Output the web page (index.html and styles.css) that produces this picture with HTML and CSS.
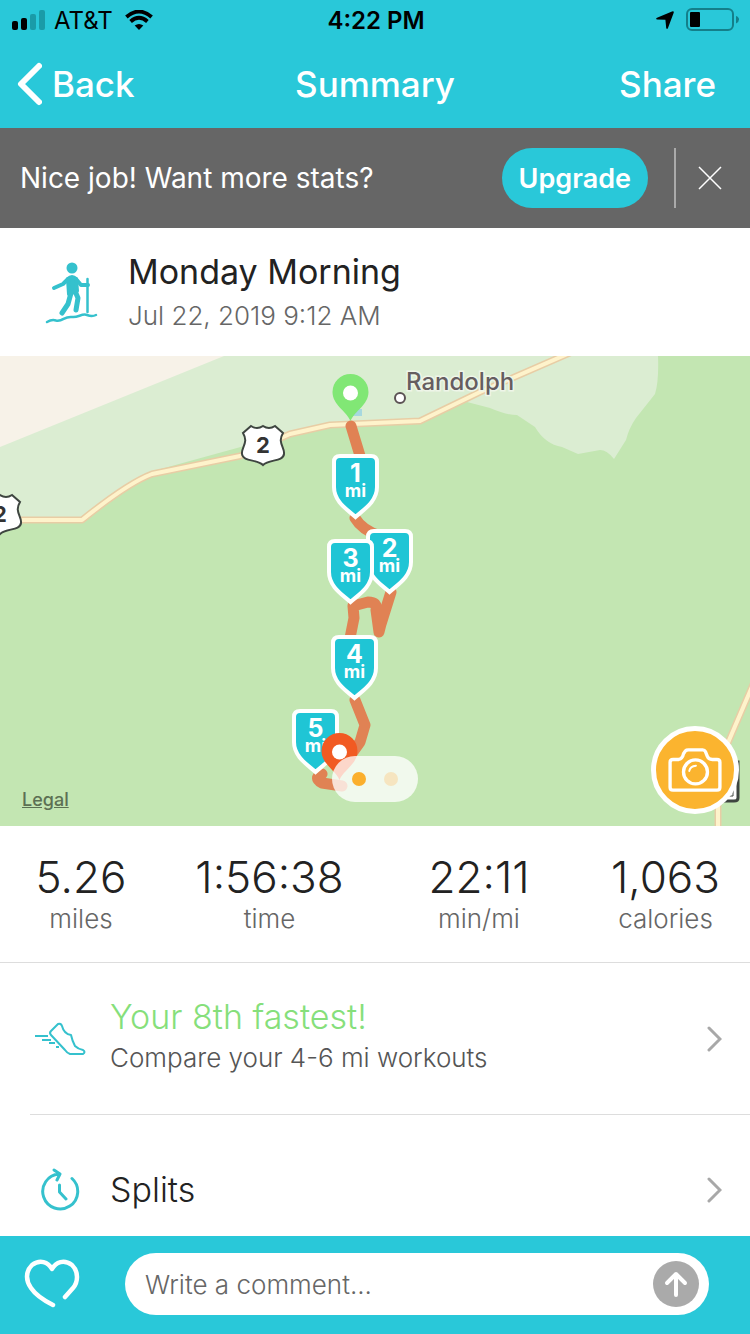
FILE: index.html
```html
<!DOCTYPE html>
<html lang="en">
<head>
<meta charset="utf-8">
<meta name="viewport" content="width=device-width, initial-scale=1">
<title>Summary</title>
<link rel="stylesheet" href="styles.css">
</head>
<body>
<div class="app">
  <header class="top">
    <div class="status">
      <div class="status-left">
        <svg class="signal" viewBox="0 0 34 20" aria-hidden="true">
          <rect x="0" y="11" width="6" height="9" rx="2"/>
          <rect x="9" y="8" width="6" height="12" rx="2"/>
          <g fill="#1a9ba8"><rect x="18" y="4" width="6" height="16" rx="2"/><rect x="27" y="0" width="6" height="20" rx="2"/></g>
        </svg>
        <span>AT&amp;T</span>
        <svg class="wifi" viewBox="0 0 28 20" aria-hidden="true">
          <path d="M14 20 9.7 15.6Q14 12.2 18.3 15.6Z"/>
          <path d="M5.600 11.400Q14 4.200 22.400 11.400M1.400 6.900Q14-3.700 26.600 6.900" fill="none" stroke="#000" stroke-width="3.900"/>
        </svg>
      </div>
      <span class="clock">4:22 PM</span>
      <div class="status-right">
        <svg class="arrow" viewBox="0 0 18 18" aria-hidden="true"><path d="M16 .4Q18.400-.4 17.600 2L12 17Q11 18.800 10.200 17L9.400 8.800 1.200 8.600Q-.8 8 1 6.800Z"/></svg>
        <svg class="battery" viewBox="0 0 54 24" aria-hidden="true">
          <rect x="1" y="1" width="46" height="21" rx="5" fill="none" stroke="#147f8a" stroke-width="2"/>
          <rect x="4" y="4" width="10" height="15" rx="1"/>
          <path d="M50 8Q53 9 53 11.500T50 15.500Z" fill="#147f8a"/>
        </svg>
      </div>
    </div>
    <nav class="nav">
      <button class="nav-button back" type="button">
        <svg viewBox="0 0 26 44" aria-hidden="true"><path d="M23 4 5 22 23 40" fill="none" stroke="#fff" stroke-width="6" stroke-linecap="round" stroke-linejoin="round"/></svg>
        Back
      </button>
      <h1>Summary</h1>
      <button class="nav-button share" type="button">Share</button>
    </nav>
  </header>

  <section class="banner">
    <p>Nice job! Want more stats?</p>
    <button class="upgrade" type="button">Upgrade</button>
    <button class="close" type="button" aria-label="Dismiss">
      <svg viewBox="0 0 24 24" aria-hidden="true"><path d="M1 1 23 23M23 1 1 23" stroke="#fff" stroke-width="1.500"/></svg>
    </button>
  </section>

  <main class="content">
    <section class="workout">
      <svg class="hiker" viewBox="0 0 56 66" aria-hidden="true" fill="none" stroke="#35c1cd" stroke-linecap="round" stroke-linejoin="round">
        <circle cx="28" cy="7" r="5.500" fill="#35c1cd" stroke="none"/>
        <path d="M24 18Q28 14 32 18L33 30 25 33Z" fill="#35c1cd" stroke-width="4"/>
        <path d="M24 18 19 23 10 27M32 18 37 24 44 24" stroke-width="4"/>
        <path d="M27 32 24 43 18 52M31 30 34 37 32 49" stroke-width="5"/>
        <path d="M43.500 18V51" stroke-width="2.500"/>
        <path d="M3 61Q8 58 12 59.500C19 61 20 55 28 56C34 57 38 52 43 54Q48 56 52 54" stroke-width="2.500"/>
      </svg>
      <div>
        <h2>Monday Morning</h2>
        <p>Jul 22, 2019 9:12 AM</p>
      </div>
    </section>

    <section class="map">
      <svg class="map-canvas" viewBox="0 0 750 470" role="img" aria-label="Route map near Randolph">
        <defs>
          <path id="mile" d="M8 2H39Q45 2 45 8V33C45 48 31 56 23.500 63C16 56 2 48 2 33V8Q2 2 8 2Z"/>
          <path id="pin" d="M0 0C-4-10-18-16-18-29A18 18 0 0 1 18-29C18-16 4-10 0 0Z"/>
          <path id="shield" d="M-12-19Q-6-15 0-19Q6-15 12-19L20-12C14-2 22 2 21 9C20 17 6 14 0 20C-6 14-20 17-21 9C-22 2-14-2-20-12Z"/>
        </defs>
        <rect width="750" height="470" fill="#c3e6b2"/>
        <path d="M0 0H658Q659 25 655 38L636 62Q629 72 626 84L614 103Q607 94 600 94L578 98 562 91Q545 88 535 71L517 59Q506 59 490 52L467 46 420 65 330 69 288 78 150 116 82 164H0Z" fill="#dbedd2"/>
        <path d="M0 0H224L0 91Z" fill="#f7f2e8"/>
        <g fill="none" stroke-linejoin="round">
          <path d="M-2 164 82 164Q128 127 152 118L240 100 290 78 330 69 420 65 480 36 572-4M754 326 718 410V474" stroke="#e8cda5" stroke-width="7"/>
          <path d="M-2 164 82 164Q128 127 152 118L240 100 290 78 330 69 420 65 480 36 572-4M754 326 718 410V474" stroke="#fef3cb" stroke-width="4"/>
        </g>
        <path d="M354 53H362V60H352Z" fill="#a6d8df"/>
        <path d="M351 70 361 103M355 162Q362 174 380 180M391 236 381 268 379 276 376 254Q378 246 368 246L353 250 354 262 350 282M355 344 365 369 360 386 350 400M322 418Q313 422 322 427L342 430" fill="none" stroke="#e08254" stroke-width="11" stroke-linecap="round" stroke-linejoin="round"/>
        <use href="#pin" x="350.500" y="65" fill="#81e775"/>
        <circle cx="350.500" cy="37" r="7.500" fill="#fff"/>
        <circle cx="400" cy="42" r="5" fill="#fff" stroke="#5b5254" stroke-width="2"/>
        <text class="place" x="406" y="34">Randolph</text>
        <g class="route-sign">
          <use href="#shield" x="263" y="89"/><text x="263" y="97">2</text>
          <use href="#shield" x="0" y="158"/><text x="0" y="166">2</text>
        </g>
        <path d="M720 406H738V442Q738 445 734 445H718" fill="#fff" stroke="#3e4540" stroke-width="3"/>
        <path d="M733 420V440H722" fill="none" stroke="#3e4540" stroke-width="1"/>
        <g class="mile">
          <use href="#mile" x="366" y="173"/><text x="389.500" y="201">2</text><text class="unit" x="389.500" y="216">mi</text>
          <use href="#mile" x="332" y="98"/><text x="355.500" y="126">1</text><text class="unit" x="355.500" y="141">mi</text>
          <use href="#mile" x="327" y="183"/><text x="350.500" y="211">3</text><text class="unit" x="350.500" y="226">mi</text>
          <use href="#mile" x="331" y="279"/><text x="354.500" y="307">4</text><text class="unit" x="354.500" y="322">mi</text>
          <use href="#mile" x="292" y="353"/><text x="315.500" y="381">5</text><text class="unit" x="315.500" y="396">mi</text>
        </g>
        <use href="#pin" x="339.500" y="424" fill="#f15a22"/>
        <circle cx="339.500" cy="396" r="7.500" fill="#fff"/>
      </svg>
      <a class="legal" href="#legal">Legal</a>
      <div class="pager"><span class="dot current"></span><span class="dot"></span></div>
      <button class="camera" type="button" aria-label="Add a photo">
        <svg viewBox="0 0 56 48" aria-hidden="true" fill="none" stroke="#fff" stroke-width="3.500" stroke-linejoin="round">
          <path d="M5 13H11Q15 12 16 7L18 4Q19 3 21 3H36Q38 3 39 5L41 10Q42 13 46 13H51Q54 13 54 16V42Q54 45 51 45H5Q2 45 2 42V16Q2 13 5 13Z"/>
          <circle cx="28.500" cy="26" r="12.500"/>
          <path d="M22 25Q23 20 29 19.500" stroke-width="2" stroke-linecap="round"/>
        </svg>
      </button>
    </section>

    <dl class="stats">
      <div><dd>5.26</dd><dt>miles</dt></div>
      <div><dd>1:56:38</dd><dt>time</dt></div>
      <div><dd>22:11</dd><dt>min/mi</dt></div>
      <div><dd>1,063</dd><dt>calories</dt></div>
    </dl>

    <a class="row" href="#compare">
      <span class="row-icon">
        <svg class="shoe" viewBox="0 0 52 34" aria-hidden="true" fill="none" stroke="#35c1cd" stroke-width="2" stroke-linejoin="round">
          <path d="M24 2Q27 1 28 4Q30 12 37 13Q38 18 41 24Q44 27 49 28Q52 30 49 32H36Q33 31 31 28L17 13Q15 11 17 9Z"/>
          <path d="M1 14H14M8 18H17M15 21H21M22 25H25"/>
        </svg>
      </span>
      <span class="row-text"><span class="highlight">Your 8th fastest!</span><span class="detail">Compare your 4-6 mi workouts</span></span>
      <svg class="chevron" viewBox="0 0 16 26" aria-hidden="true"><path d="M3 2 14 13 3 24"/></svg>
    </a>
    <a class="row" href="#splits">
      <span class="row-icon">
        <svg class="timer" viewBox="0 0 40 44" aria-hidden="true" fill="none" stroke="#35c1cd" stroke-width="3" stroke-linecap="round" stroke-linejoin="round">
          <path d="M19 6A17.500 17.500 0 1 0 32 10.500M14 2 20 6 17 12M19.500 17V24L26 31"/>
        </svg>
      </span>
      <span class="row-text"><span class="row-title">Splits</span></span>
      <svg class="chevron" viewBox="0 0 16 26" aria-hidden="true"><path d="M3 2 14 13 3 24"/></svg>
    </a>
  </main>

  <footer class="composer">
    <button class="like" type="button" aria-label="Like">
      <svg viewBox="0 0 56 50" aria-hidden="true"><path d="M41 38L49 29C54 23 55 13 48 6C40 0 32 3 28 10C24 3 16 0 8 6C1 13 2 22 7 29Q13 38 29 46" fill="none" stroke="#fff" stroke-width="4.500" stroke-linecap="round" stroke-linejoin="round"/></svg>
    </button>
    <form class="comment">
      <input type="text" aria-label="Comment" placeholder="Write a comment...">
      <button class="send" type="button" aria-label="Send">
        <svg viewBox="0 0 24 28" aria-hidden="true"><path d="M12 25V4M3 13 12 4 21 13" fill="none" stroke="#fff" stroke-width="4" stroke-linecap="round" stroke-linejoin="round"/></svg>
      </button>
    </form>
  </footer>
</div>
</body>
</html>
```
FILE: styles.css
```css
* { box-sizing: border-box; }

body, h1, h2, p, dl, dd { margin: 0; }

body {
  font-family: Inter, "Liberation Sans", sans-serif;
  color: #222;
  background: #fff;
}

button {
  padding: 0;
  border: 0;
  background: none;
  font: inherit;
  color: inherit;
}

svg { display: block; flex-shrink: 0; }

.app {
  display: flex;
  flex-direction: column;
  height: 100vh;
}

.top { background: #29c8d9; }

.status {
  display: grid;
  grid-template-columns: 1fr auto 1fr;
  align-items: center;
  height: 40px;
  padding: 0 10px 0 12px;
  font-size: 24px;
  color: #000;
}
.status-left, .status-right { display: flex; align-items: center; }
.status-left { gap: 8px; }
.status-right { justify-content: flex-end; gap: 12px; }
.signal { width: 34px; height: 20px; }
.wifi { width: 28px; height: 20px; margin-left: 4px; }
.arrow { width: 18px; height: 18px; }
.battery { width: 54px; height: 24px; }
.clock { font-weight: 600; }

.nav {
  display: grid;
  grid-template-columns: 1fr auto 1fr;
  align-items: center;
  height: 88px;
  padding: 0 16px;
  color: #fff;
  font-size: 35px;
  font-weight: 500;
}
.nav h1 { font-size: 35px; font-weight: 500; }
.back { display: flex; align-items: center; gap: 10px; justify-self: start; }
.back svg { width: 26px; height: 44px; }
.share { justify-self: end; padding-right: 18px; }

.banner {
  display: flex;
  align-items: center;
  height: 100px;
  flex-shrink: 0;
  padding: 0 16px 0 20px;
  background: #666;
  color: #fff;
  font-size: 28px;
}
.banner p { flex: 1; }
.upgrade {
  height: 60px;
  padding: 0 17px;
  border-radius: 30px;
  background: #29c8d9;
  font-size: 27px;
  font-weight: 600;
}
.close {
  display: flex;
  align-items: center;
  justify-content: center;
  height: 60px;
  margin-left: 26px;
  padding: 0 12px 0 22px;
  border-left: 2px solid #aaa;
}
.close svg { width: 24px; height: 24px; }

.content {
  flex: 1;
  min-height: 0;
  overflow-y: auto;
  scrollbar-width: none;
}

.workout {
  display: flex;
  align-items: center;
  gap: 28px;
  height: 128px;
  padding: 4px 44px 0;
}
.hiker { width: 56px; height: 66px; }
.workout h2 { font-size: 34px; line-height: 44px; font-weight: 400; }
.workout p { font-size: 26px; line-height: 44px; font-weight: 300; color: #666; }

.map { position: relative; }
.map-canvas { width: 100%; height: auto; }
.place {
  font-size: 24px;
  font-weight: 500;
  fill: #655d60;
  stroke: #eef5e8;
  stroke-width: 3px;
  paint-order: stroke;
}
.route-sign use { fill: #fff; stroke: #3e4540; stroke-width: 2px; }
.route-sign text { font-size: 22px; font-weight: 700; text-anchor: middle; fill: #333; }
.mile use { fill: #1fc5d5; stroke: #fff; stroke-width: 4px; }
.mile text { font-size: 25px; font-weight: 700; text-anchor: middle; fill: #fff; }
.mile .unit { font-size: 18px; }
.legal {
  position: absolute;
  left: 22px;
  bottom: 16px;
  font-size: 18px;
  font-weight: 500;
  color: #5c7053;
}
.pager {
  position: absolute;
  left: 50%;
  bottom: 24px;
  display: flex;
  align-items: center;
  justify-content: center;
  gap: 18px;
  width: 86px;
  height: 46px;
  border-radius: 23px;
  background: rgba(255, 255, 255, .76);
  transform: translateX(-50%);
}
.dot { width: 14px; height: 14px; border-radius: 50%; background: #f6e5c0; }
.dot.current { background: #fbaf2d; }
.camera {
  position: absolute;
  right: 11px;
  bottom: 12px;
  display: flex;
  align-items: center;
  justify-content: center;
  width: 88px;
  height: 88px;
  border: 5px solid #fff;
  border-radius: 50%;
  background: #fbb42f;
}
.camera svg { width: 54px; height: 46px; }

.stats {
  display: grid;
  grid-template-columns: 162fr 215fr 204fr 169fr;
  height: 137px;
  padding-top: 26px;
  border-bottom: 1px solid #ddd;
  text-align: center;
}
.stats div { display: flex; flex-direction: column; }
.stats dd { font-size: 44px; line-height: 50px; font-weight: 300; }
.stats dt { font-size: 26px; line-height: 34px; font-weight: 300; color: #666; }

.row {
  display: flex;
  align-items: center;
  height: 151px;
  padding-right: 28px;
  color: inherit;
  text-decoration: none;
}
.row + .row { margin-left: 30px; border-top: 1px solid #ddd; }
.row-icon { display: flex; justify-content: center; width: 110px; padding-left: 10px; }
.row + .row .row-icon { width: 80px; padding: 0 20px 0 0; }
.shoe { width: 52px; height: 34px; }
.timer { width: 40px; height: 44px; }
.row-text { display: flex; flex: 1; flex-direction: column; }
.highlight { font-size: 34px; line-height: 42px; font-weight: 300; color: #86df7b; }
.detail { padding-bottom: 4px; font-size: 26px; line-height: 40px; font-weight: 300; color: #555; }
.row-title { font-size: 34px; line-height: 42px; font-weight: 300; }
.chevron { width: 16px; height: 26px; fill: none; stroke: #a8a8a8; stroke-width: 3px; stroke-linecap: round; }

.composer {
  display: flex;
  align-items: center;
  gap: 45px;
  height: 98px;
  flex-shrink: 0;
  padding: 0 41px 2px 24px;
  background: #29c8d9;
}
.like svg { width: 56px; height: 50px; }
.comment {
  display: flex;
  align-items: center;
  flex: 1;
  height: 62px;
  padding: 0 10px 0 20px;
  border-radius: 31px;
  background: #fff;
}
.comment input {
  flex: 1;
  min-width: 0;
  padding: 0;
  border: 0;
  outline: 0;
  background: none;
  font: 300 26px Inter, "Liberation Sans", sans-serif;
}
.comment input::placeholder { color: #666; opacity: 1; }
.send {
  display: flex;
  align-items: center;
  justify-content: center;
  width: 46px;
  height: 46px;
  border-radius: 50%;
  background: #aaa;
}
.send svg { width: 24px; height: 28px; }
```
